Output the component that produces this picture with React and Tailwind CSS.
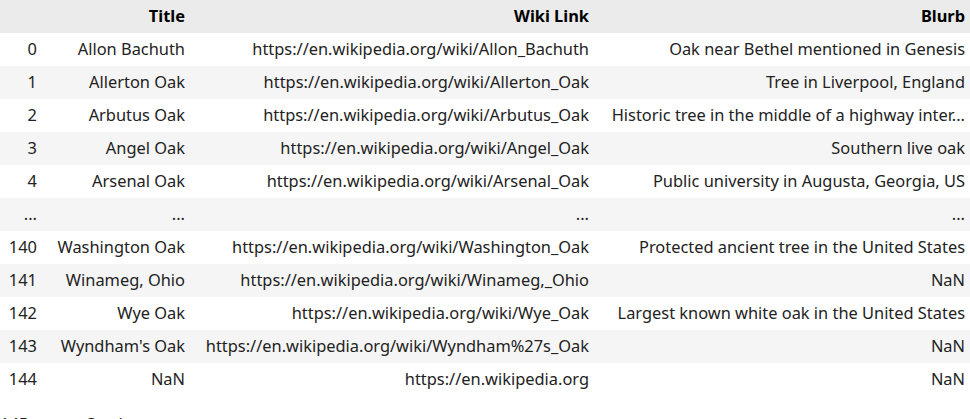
import React from "react";

const rows = [
  ["0", "Allon Bachuth", "https://en.wikipedia.org/wiki/Allon_Bachuth", "Oak near Bethel mentioned in Genesis"],
  ["1", "Allerton Oak", "https://en.wikipedia.org/wiki/Allerton_Oak", "Tree in Liverpool, England"],
  ["2", "Arbutus Oak", "https://en.wikipedia.org/wiki/Arbutus_Oak", "Historic tree in the middle of a highway inter..."],
  ["3", "Angel Oak", "https://en.wikipedia.org/wiki/Angel_Oak", "Southern live oak"],
  ["4", "Arsenal Oak", "https://en.wikipedia.org/wiki/Arsenal_Oak", "Public university in Augusta, Georgia, US"],
  ["...", "...", "...", "..."],
  ["140", "Washington Oak", "https://en.wikipedia.org/wiki/Washington_Oak", "Protected ancient tree in the United States"],
  ["141", "Winameg, Ohio", "https://en.wikipedia.org/wiki/Winameg,_Ohio", "NaN"],
  ["142", "Wye Oak", "https://en.wikipedia.org/wiki/Wye_Oak", "Largest known white oak in the United States"],
  ["143", "Wyndham's Oak", "https://en.wikipedia.org/wiki/Wyndham%27s_Oak", "NaN"],
  ["144", "NaN", "https://en.wikipedia.org", "NaN"],
];

export default function App() {
  return (
    <div className="w-[970px] h-[419px] overflow-hidden bg-white text-[16.4px] text-[#222] font-['Noto_Sans','Open_Sans',sans-serif]">
      <div className="grid grid-cols-[42px_148px_404px_376px]">
        <div className="h-[33px] bg-[#ebebeb]" />
        <div className="h-[33px] bg-[#ebebeb] flex items-center justify-end pr-[5px] font-bold text-black">Title</div>
        <div className="h-[33px] bg-[#ebebeb] flex items-center justify-end pr-[5px] font-bold text-black">Wiki Link</div>
        <div className="h-[33px] bg-[#ebebeb] flex items-center justify-end pr-[5px] font-bold text-black">Blurb</div>
        {rows.map((r, i) => {
          const bg = i % 2 === 1 ? "bg-[#f5f5f5]" : "bg-white";
          return (
            <React.Fragment key={i}>
              {r.map((c, j) => (
                <div
                  key={j}
                  className={`h-[33px] ${bg} flex items-center justify-end pr-[5px] whitespace-nowrap`}
                >
                  {c}
                </div>
              ))}
            </React.Fragment>
          );
        })}
      </div>
      <div className="mt-[16px] whitespace-nowrap">145 rows × 3 columns</div>
    </div>
  );
}
